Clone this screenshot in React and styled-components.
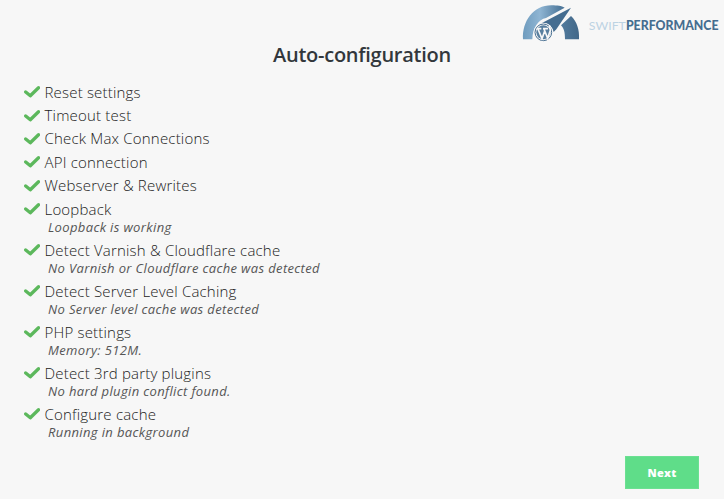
import React from 'react'
import styled, { createGlobalStyle } from 'styled-components'

const steps = [
  { title: 'Reset settings' },
  { title: 'Timeout test' },
  { title: 'Check Max Connections' },
  { title: 'API connection' },
  { title: 'Webserver & Rewrites' },
  { title: 'Loopback', note: 'Loopback is working' },
  { title: 'Detect Varnish & Cloudflare cache', note: 'No Varnish or Cloudflare cache was detected' },
  { title: 'Detect Server Level Caching', note: 'No Server level cache was detected' },
  { title: 'PHP settings', note: 'Memory: 512M.' },
  { title: 'Detect 3rd party plugins', note: 'No hard plugin conflict found.' },
  { title: 'Configure cache', note: 'Running in background' },
]

function Gauge() {
  return (
    <svg width="58" height="38" viewBox="0 0 174 114">
      <defs>
        <linearGradient id="dial" x1="0" y1="0" x2="1" y2="0">
          <stop offset="0" stopColor="#6f9cbe" />
          <stop offset="0.3" stopColor="#8fb5d3" />
          <stop offset="0.65" stopColor="#527c9f" />
          <stop offset="1" stopColor="#426788" />
        </linearGradient>
      </defs>
      <path
        fill="url(#dial)"
        d="M3 106C0 52 34 4 88 4c19 0 30 2 40 7L72 42C50 46 32 70 31 106zM147 36c17 16 26 40 24 70h-42c0-21-3-32-12-42z"
      />
      <path fill="#456d90" d="M147 11L60 57c18-1 31 9 35 27l8-8z" />
      <circle cx="64" cy="85" r="29" fill="#f7f7f7" />
      <circle cx="64" cy="85" r="25" fill="none" stroke="#456d90" strokeWidth="3" />
      <circle cx="64" cy="85" r="21" fill="#587f9f" />
      <path
        fill="none"
        stroke="#f7f7f7"
        strokeWidth="5"
        d="M44 74h14M63 74h15M48 75l12 29 8-23M66 75l11 28 8-24c1-5-3-7-3-13"
      />
    </svg>
  )
}

function App() {
  return (
    <Page>
      <GlobalStyle />
      <Logo>
        <Gauge />
        <Brand>SWIFT<b>PERFORMANCE</b></Brand>
      </Logo>
      <Title>Auto-configuration</Title>
      <Steps>
        {steps.map((step) => (
          <li key={step.title}>
            <Step>
              <Check viewBox="0 0 16 13">
                <path d="M1.7 6.9L6.3 10.7L14.5 2.7" />
              </Check>
              <span>{step.title}</span>
            </Step>
            {step.note && <Note>{step.note}</Note>}
          </li>
        ))}
      </Steps>
      <Button>Next</Button>
    </Page>
  )
}

const GlobalStyle = createGlobalStyle`
  body{
    margin:0;
    background:#f7f7f7;
  }
`
const Page = styled.div`
  box-sizing:border-box;
  height:499px;
  display:flex;
  flex-direction:column;
  background:#f7f7f7;
  font-family:"Open Sans", "Noto Sans", sans-serif;
  overflow:hidden;
`
const Logo = styled.div`
  display:flex;
  align-items:center;
  align-self:flex-end;
  height:38px;
  padding:4px 5.5px 0 0;
`
const Brand = styled.div`
  margin:5px 0 0 8.5px;
  font-family:Lato, sans-serif;
  font-size:12.3px;
  line-height:16px;
  color:#bdd3e3;
  white-space:nowrap;
  b{
    font-weight:900;
    color:#456d90;
  }
`
const Title = styled.h1`
  margin:0;
  height:38px;
  line-height:25px;
  text-align:center;
  font-size:20px;
  font-weight:600;
  letter-spacing:-0.26px;
  color:#32373c;
`
const Steps = styled.ul`
  flex:1;
  margin:0;
  padding:0 0 0 24px;
  list-style:none;
`
const Step = styled.div`
  display:flex;
  align-items:center;
  height:23.4px;
  font-size:15px;
  font-weight:350;
  letter-spacing:0.19px;
  color:#222;
  white-space:nowrap;
`
const Check = styled.svg`
  width:16px;
  height:13px;
  margin-right:4.5px;
  fill:none;
  stroke:#5cb85c;
  stroke-width:3.3;
  stroke-linecap:round;
  stroke-linejoin:round;
`
const Note = styled.div`
  height:17.6px;
  padding-left:24px;
  line-height:15px;
  font-size:13px;
  font-style:italic;
  letter-spacing:0.36px;
  color:#555;
  white-space:nowrap;
`
const Button = styled.button`
  align-self:flex-end;
  width:74px;
  height:33px;
  margin:0 25px 10px 0;
  padding:0;
  border:1px solid #6be092;
  background:#5fdd89;
  color:#fff;
  font-family:"Open Sans", sans-serif;
  font-size:11px;
  font-weight:800;
  letter-spacing:0.3px;
`
export default App
